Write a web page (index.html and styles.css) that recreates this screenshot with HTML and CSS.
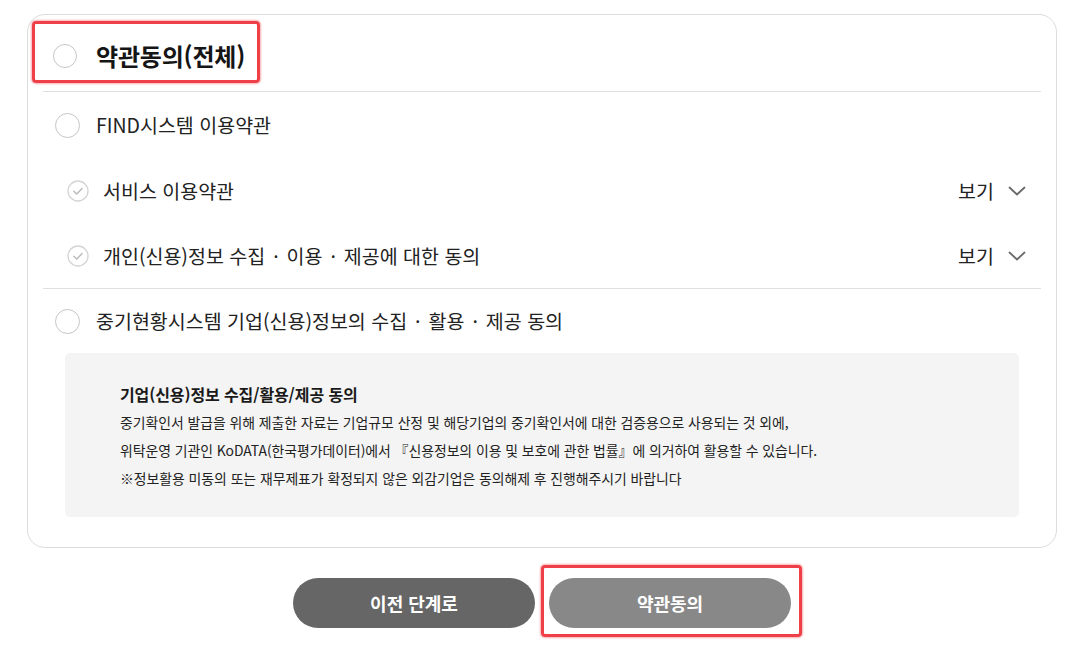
FILE: index.html
```html
<!DOCTYPE html>
<html lang="ko">
<head>
<meta charset="utf-8">
<title>약관동의</title>
<link rel="stylesheet" href="styles.css">
</head>
<body>
<div class="page">
  <section class="card">
    <div class="all-row">
      <label class="all-label mark">
        <span class="radio"></span>
        <span class="all-title">약관동의(전체)</span>
      </label>
    </div>

    <div class="group">
      <div class="row">
        <span class="radio"></span>
        <span class="row-text">FIND시스템 이용약관</span>
      </div>
      <div class="sub-row">
        <svg class="check" viewBox="0 0 22 22" width="22" height="22"><circle cx="11" cy="11" r="10" fill="none" stroke="#d4d4d4" stroke-width="1.3"/><path d="M6.8 11.3l2.9 2.8 5.4-5.6" fill="none" stroke="#b9b9b9" stroke-width="1.4" stroke-linecap="round" stroke-linejoin="round"/></svg>
        <span class="sub-text">서비스 이용약관</span>
        <span class="view">보기<svg class="chev" viewBox="0 0 18 10" width="18" height="10"><path d="M1.5 1.5l7.5 7 7.5-7" fill="none" stroke="#6a6a6a" stroke-width="1.8" stroke-linecap="round" stroke-linejoin="round"/></svg></span>
      </div>
      <div class="sub-row">
        <svg class="check" viewBox="0 0 22 22" width="22" height="22"><circle cx="11" cy="11" r="10" fill="none" stroke="#d4d4d4" stroke-width="1.3"/><path d="M6.8 11.3l2.9 2.8 5.4-5.6" fill="none" stroke="#b9b9b9" stroke-width="1.4" stroke-linecap="round" stroke-linejoin="round"/></svg>
        <span class="sub-text">개인(신용)정보 수집 <span class="dot">·</span> 이용 <span class="dot">·</span> 제공에 대한 동의</span>
        <span class="view">보기<svg class="chev" viewBox="0 0 18 10" width="18" height="10"><path d="M1.5 1.5l7.5 7 7.5-7" fill="none" stroke="#6a6a6a" stroke-width="1.8" stroke-linecap="round" stroke-linejoin="round"/></svg></span>
      </div>
    </div>

    <div class="group group-last">
      <div class="row row-last">
        <span class="radio"></span>
        <span class="row-text">중기현황시스템 기업(신용)정보의 수집 <span class="dot">·</span> 활용 <span class="dot">·</span> 제공 동의</span>
      </div>
      <div class="notice">
        <p class="notice-title">기업(신용)정보 수집/활용/제공 동의</p>
        <p>중기확인서 발급을 위해 제출한 자료는 기업규모 산정 및 해당기업의 중기확인서에 대한 검증용으로 사용되는 것 외에,</p>
        <p>위탁운영 기관인 KoDATA(한국평가데이터)에서 『신용정보의 이용 및 보호에 관한 법률』에 의거하여 활용할 수 있습니다.</p>
        <p>※정보활용 미동의 또는 재무제표가 확정되지 않은 외감기업은 동의해제 후 진행해주시기 바랍니다</p>
      </div>
    </div>
  </section>

  <div class="actions">
    <button class="btn btn-prev" type="button">이전 단계로</button>
    <span class="btn-wrap mark">
      <button class="btn btn-agree" type="button">약관동의</button>
    </span>
  </div>
</div>
</body>
</html>
```

FILE: styles.css
```css
* { box-sizing: border-box; }

html, body {
  margin: 0;
  padding: 0;
  background: #fff;
}

body {
  font-family: "Noto Sans CJK KR", "Noto Sans", sans-serif;
  color: #222;
}

.page {
  padding: 14px 15px 30px 27px;
}

.card {
  border: 1px solid #dcdcdc;
  border-radius: 18px;
  padding: 0 15px 30px 15px;
}

.all-row {
  height: 77px;
  padding-top: 6px;
  display: flex;
  align-items: center;
  border-bottom: 1px solid #e0e0e0;
  padding-left: 10px;
}

.all-label {
  position: relative;
  display: inline-flex;
  align-items: center;
  gap: 19px;
  height: 30px;
}

.all-title {
  font-size: 24px;
  font-weight: 700;
  color: #151515;
  line-height: 30px;
  letter-spacing: -0.2px;
}

.mark::after {
  content: "";
  position: absolute;
  border: 3px solid rgba(236, 30, 40, 0.85);
  box-shadow: 0 0 2px 1px rgba(236, 30, 40, 0.35);
  border-radius: 4px;
  pointer-events: none;
}

.all-label.mark::after {
  left: -21px;
  right: -15px;
  top: -20px;
  bottom: -12px;
}

.radio {
  width: 24px;
  height: 24px;
  border: 1px solid #c6c6c6;
  border-radius: 50%;
  flex: none;
  background: #fff;
}

.row .radio {
  width: 25px;
  height: 25px;
}

.group {
  border-bottom: 1px solid #e0e0e0;
}

.group-last {
  border-bottom: none;
}

.row {
  height: 66px;
  display: flex;
  align-items: center;
  padding-left: 12px;
  gap: 16px;
}

.row-last {
  height: 64px;
}

.row-text {
  font-size: 19.5px;
  line-height: 26px;
  color: #222;
}

.dot {
  margin: 0 2.5px;
}

.sub-row {
  height: 65px;
  display: flex;
  align-items: center;
  padding-left: 24px;
  padding-right: 15px;
}

.check {
  flex: none;
  margin-right: 14px;
}

.sub-text {
  font-size: 19.5px;
  line-height: 26px;
  color: #222;
  flex: 1;
}

.view {
  display: inline-flex;
  align-items: center;
  gap: 14px;
  font-size: 19.5px;
  line-height: 26px;
  color: #222;
}

.chev {
  margin-top: 1px;
}

.notice {
  margin: 0 22px;
  background: #f4f4f4;
  border-radius: 5px;
  padding: 27px 55px 25px;
}

.notice p {
  margin: 0;
  font-size: 13.9px;
  line-height: 28px;
  color: #222;
  letter-spacing: -0.05px;
}

.notice .notice-title {
  font-size: 16px;
  font-weight: 700;
  color: #1a1a1a;
  letter-spacing: -0.1px;
}

.actions {
  display: flex;
  justify-content: center;
  gap: 14px;
  margin-top: 30px;
}

.btn-wrap {
  position: relative;
  display: block;
  width: 242px;
  height: 50px;
}

.btn-wrap.mark::after {
  left: -8px;
  right: -11px;
  top: -13px;
  bottom: -9px;
}

.btn {
  display: block;
  width: 242px;
  height: 50px;
  border: none;
  border-radius: 25px;
  color: #fff;
  font-family: "Noto Sans CJK KR", "Noto Sans", sans-serif;
  font-size: 18px;
  font-weight: 700;
  cursor: pointer;
}

.btn-prev {
  background: #666;
}

.btn-agree {
  background: #888;
}
```
